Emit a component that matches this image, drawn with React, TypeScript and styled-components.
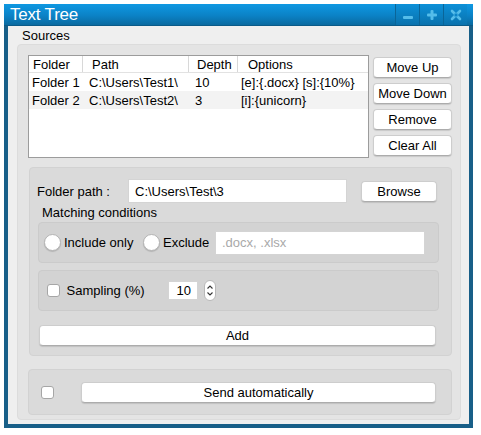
import styled, { createGlobalStyle } from 'styled-components';

const GlobalStyle = createGlobalStyle`
  html, body {
    margin: 0;
    padding: 0;
    background: #ffffff;
  }
  body {
    font-family: "Liberation Sans", Arial, sans-serif;
    font-size: 13px;
    color: #000;
  }
  * {
    box-sizing: border-box;
  }
`;

interface Source {
  folder: string;
  path: string;
  depth: string;
  options: string;
}

const sources: Source[] = [
  { folder: 'Folder 1', path: 'C:\\Users\\Test1\\', depth: '10', options: '[e]:{.docx} [s]:{10%}' },
  { folder: 'Folder 2', path: 'C:\\Users\\Test2\\', depth: '3', options: '[i]:{unicorn}' },
];

const headers = ['Folder', 'Path', 'Depth', 'Options'];
const headerPad = [4, 9, 8, 10];
const cellPad = [3, 7, 7, 4];

const Window = styled.div`
  width: 469px;
  margin: 4px 0 0 4px;
  display: flex;
  flex-direction: column;
`;

const TitleBar = styled.div`
  height: 22px;
  display: flex;
  align-items: stretch;
  background: linear-gradient(#0e98e2, #0b82c6 55%, #0a6aa0);
  border-bottom: 1px solid #0a5a88;
`;

const Title = styled.div`
  display: flex;
  align-items: center;
  padding-left: 6px;
  color: #ffffff;
  font-size: 17px;
  letter-spacing: -0.2px;
`;

const Controls = styled.div`
  margin-left: auto;
  margin-right: 6px;
  display: flex;
`;

const ControlButton = styled.div`
  width: 24px;
  display: flex;
  align-items: center;
  justify-content: center;
  border-left: 1px solid #0a6598;
  background: linear-gradient(#0c90d8, #0a72ad);
`;

const Body = styled.div`
  height: 402px;
  background: #efefef;
  border: 4px solid #185f88;
  border-top: 0;
  display: flex;
  flex-direction: column;
`;

const SectionLabel = styled.div`
  height: 18px;
  padding: 2px 0 0 14px;
  line-height: 16px;
`;

const OuterGroup = styled.div`
  margin: 0 8px 0 9px;
  height: 376px;
  background: #e4e4e4;
  border: 1px solid #dcdcdc;
  border-radius: 4px;
  padding: 10px 8px 4px 10px;
  display: flex;
  flex-direction: column;
`;

const TopRow = styled.div`
  display: flex;
  gap: 4px;
  height: 103px;
`;

const Table = styled.div`
  width: 341px;
  height: 103px;
  background: #ffffff;
  border: 1px solid #9c9c9c;
  display: flex;
  flex-direction: column;
`;

const Row = styled.div<{ $header?: boolean; $alt?: boolean }>`
  display: grid;
  grid-template-columns: 53px 106px 49px 1fr;
  height: ${(p) => (p.$header ? '17px' : '18px')};
  align-items: center;
  background: ${(p) => (p.$alt ? '#f3f3f3' : '#ffffff')};
  border-bottom: ${(p) => (p.$header ? '1px solid #e2e2e2' : 'none')};
`;

const Cell = styled.div<{ $pad: number; $sep?: boolean }>`
  padding-left: ${(p) => p.$pad}px;
  white-space: nowrap;
  overflow: hidden;
  height: 100%;
  display: flex;
  align-items: center;
  border-left: ${(p) => (p.$sep ? '1px solid #d8d8d8' : 'none')};
`;

const SideButtons = styled.div`
  display: flex;
  flex-direction: column;
  gap: 5px;
  padding-top: 2px;
`;

const Button = styled.button<{ $w?: number }>`
  width: ${(p) => (p.$w ? `${p.$w}px` : '100%')};
  height: 21px;
  padding: 0;
  background: #ffffff;
  border: 1px solid #cdcdcd;
  border-bottom-color: #acacac;
  border-radius: 4px;
  box-shadow: 0 1px 1px rgba(0, 0, 0, 0.12);
  font-family: "Liberation Sans", Arial, sans-serif;
  font-size: 13px;
  color: #000;
  flex-shrink: 0;
`;

const FolderGroup = styled.div`
  margin: 9px 0 0 1px;
  width: 423px;
  height: 189px;
  background: #dadada;
  border: 1px solid #d2d2d2;
  border-radius: 4px;
  display: flex;
  flex-direction: column;
  padding: 11px 0 0 0;
`;

const PathRow = styled.div`
  display: flex;
  align-items: center;
  height: 24px;
`;

const PathLabel = styled.div`
  width: 98px;
  padding-left: 7px;
`;

const TextField = styled.div<{ $w: number; $h: number; $placeholder?: boolean; $right?: boolean }>`
  width: ${(p) => p.$w}px;
  height: ${(p) => p.$h}px;
  background: #ffffff;
  border: 1px solid #d4d4d4;
  display: flex;
  align-items: center;
  justify-content: ${(p) => (p.$right ? 'flex-end' : 'flex-start')};
  padding: 0 6px;
  color: ${(p) => (p.$placeholder ? '#a9a9a9' : '#000')};
  flex-shrink: 0;
`;

const MatchLabel = styled.div`
  height: 19px;
  line-height: 19px;
  padding-left: 12px;
`;

const InnerBox = styled.div<{ $gap?: number }>`
  margin: ${(p) => p.$gap ?? 0}px 0 0 8px;
  width: 401px;
  height: 41px;
  background: #d3d3d3;
  border: 1px solid #cbcbcb;
  border-radius: 4px;
  display: flex;
  align-items: center;
  padding-left: 5px;
`;

const Radio = styled.span`
  width: 17px;
  height: 17px;
  border-radius: 50%;
  background: #ffffff;
  border: 1px solid #b4b4b4;
  box-shadow: 0 1px 1px rgba(0, 0, 0, 0.15);
  flex-shrink: 0;
`;

const Check = styled.span<{ $size?: number }>`
  width: ${(p) => p.$size ?? 13}px;
  height: ${(p) => p.$size ?? 13}px;
  border-radius: 3px;
  background: #ffffff;
  border: 1px solid #a6a6a6;
  flex-shrink: 0;
`;

const OptionText = styled.span<{ $w?: number }>`
  padding-left: 3px;
  width: ${(p) => (p.$w ? `${p.$w}px` : 'auto')};
  white-space: nowrap;
`;

const Spinner = styled.div`
  width: 12px;
  height: 21px;
  margin-left: 6px;
  background: #ffffff;
  border: 1px solid #b8b8b8;
  border-radius: 6px;
  display: flex;
  flex-direction: column;
  align-items: center;
  justify-content: center;
  gap: 3px;
`;

const AddRow = styled.div`
  margin: 14px 0 0 9px;
  width: 397px;
`;

const BottomGroup = styled.div`
  margin-top: 13px;
  width: 424px;
  height: 46px;
  background: #dadada;
  border: 1px solid #d2d2d2;
  border-radius: 4px;
  display: flex;
  align-items: center;
  padding-left: 12px;
`;

const SendWrap = styled.div`
  margin-left: 27px;
  width: 355px;
`;

function MinIcon() {
  return (
    <svg width="12" height="12" viewBox="0 0 12 12">
      <rect x="1" y="7" width="10" height="3" rx="1" fill="#55bdea" />
    </svg>
  );
}

function PlusIcon() {
  return (
    <svg width="12" height="12" viewBox="0 0 12 12">
      <rect x="1" y="4.5" width="10" height="3" rx="1" fill="#55bdea" />
      <rect x="4.5" y="1" width="3" height="10" rx="1" fill="#55bdea" />
    </svg>
  );
}

function CloseIcon() {
  return (
    <svg width="12" height="12" viewBox="0 0 12 12">
      <path d="M2 2 L10 10 M10 2 L2 10" stroke="#55bdea" strokeWidth="2.6" strokeLinecap="round" />
      <rect x="4.5" y="4.5" width="3" height="3" fill="#0b84c7" />
    </svg>
  );
}

function SpinArrows() {
  return (
    <>
      <svg width="6" height="4" viewBox="0 0 6 4">
        <path d="M0.5 3.5 L3 1 L5.5 3.5" stroke="#333" strokeWidth="1.1" fill="none" />
      </svg>
      <svg width="6" height="4" viewBox="0 0 6 4">
        <path d="M0.5 0.5 L3 3 L5.5 0.5" stroke="#333" strokeWidth="1.1" fill="none" />
      </svg>
    </>
  );
}

export default function App() {
  return (
    <>
      <GlobalStyle />
      <Window>
        <TitleBar>
          <Title>Text Tree</Title>
          <Controls>
            <ControlButton><MinIcon /></ControlButton>
            <ControlButton><PlusIcon /></ControlButton>
            <ControlButton><CloseIcon /></ControlButton>
          </Controls>
        </TitleBar>
        <Body>
          <SectionLabel>Sources</SectionLabel>
          <OuterGroup>
            <TopRow>
              <Table>
                <Row $header>
                  {headers.map((h, i) => (
                    <Cell key={h} $pad={headerPad[i]} $sep={i > 0}>{h}</Cell>
                  ))}
                </Row>
                {sources.map((s, r) => (
                  <Row key={s.folder} $alt={r % 2 === 1}>
                    {[s.folder, s.path, s.depth, s.options].map((v, i) => (
                      <Cell key={i} $pad={cellPad[i]}>{v}</Cell>
                    ))}
                  </Row>
                ))}
              </Table>
              <SideButtons>
                <Button $w={79}>Move Up</Button>
                <Button $w={79}>Move Down</Button>
                <Button $w={79}>Remove</Button>
                <Button $w={79}>Clear All</Button>
              </SideButtons>
            </TopRow>

            <FolderGroup>
              <PathRow>
                <PathLabel>Folder path :</PathLabel>
                <TextField $w={219} $h={24}>C:\Users\Test\3</TextField>
                <Button $w={76} style={{ marginLeft: 14 }}>Browse</Button>
              </PathRow>
              <MatchLabel>Matching conditions</MatchLabel>
              <InnerBox>
                <Radio />
                <OptionText $w={82}>Include only</OptionText>
                <Radio />
                <OptionText $w={55}>Exclude</OptionText>
                <TextField $w={210} $h={24} $placeholder>.docx, .xlsx</TextField>
              </InnerBox>
              <InnerBox $gap={7}>
                <Check style={{ marginLeft: 3 }} />
                <OptionText $w={108}>&nbsp;Sampling (%)</OptionText>
                <TextField $w={30} $h={19} $right>10</TextField>
                <Spinner><SpinArrows /></Spinner>
              </InnerBox>
              <AddRow>
                <Button>Add</Button>
              </AddRow>
            </FolderGroup>

            <BottomGroup>
              <Check />
              <SendWrap>
                <Button>Send automatically</Button>
              </SendWrap>
            </BottomGroup>
          </OuterGroup>
        </Body>
      </Window>
    </>
  );
}
